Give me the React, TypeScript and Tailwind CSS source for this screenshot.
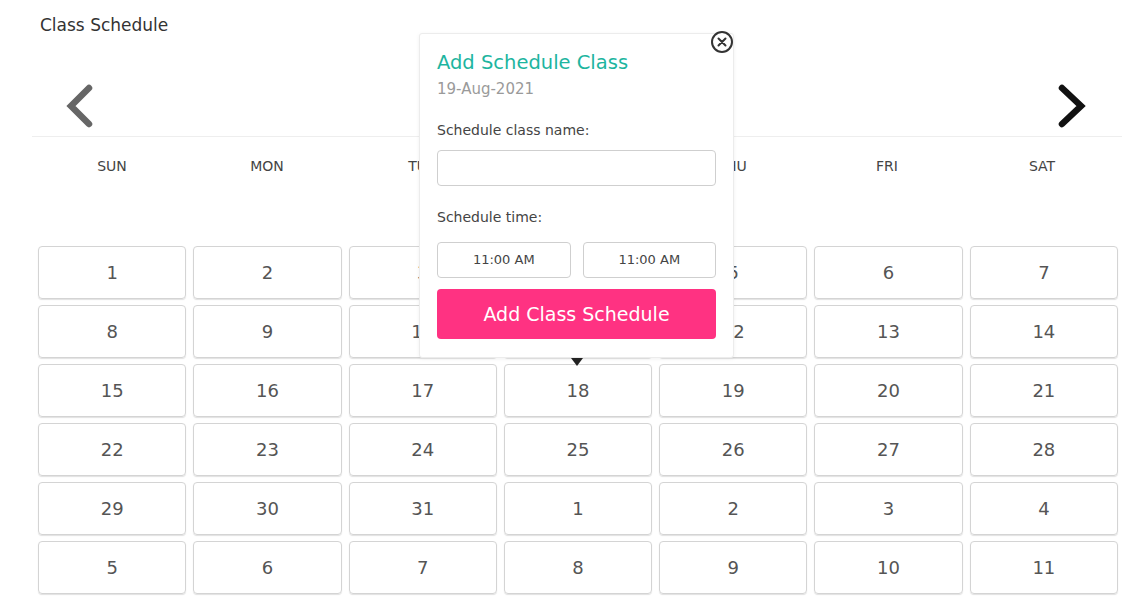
import React from "react";

const days = ["SUN", "MON", "TUE", "WED", "THU", "FRI", "SAT"];

const weeks = [
  [1, 2, 3, 4, 5, 6, 7],
  [8, 9, 10, 11, 12, 13, 14],
  [15, 16, 17, 18, 19, 20, 21],
  [22, 23, 24, 25, 26, 27, 28],
  [29, 30, 31, 1, 2, 3, 4],
  [5, 6, 7, 8, 9, 10, 11],
];

function Chevron({ dir, color }: { dir: "left" | "right"; color: string }) {
  return (
    <svg width="32" height="44" viewBox="0 0 32 44">
      {dir === "left" ? (
        <path d="M25 4 L7 22 L25 40" fill="none" stroke={color} strokeWidth="6.5" strokeLinecap="round" strokeLinejoin="miter" />
      ) : (
        <path d="M6 4 L25 22 L6 40" fill="none" stroke={color} strokeWidth="6.5" strokeLinecap="round" strokeLinejoin="miter" />
      )}
    </svg>
  );
}

export default function App() {
  return (
    <div className="relative w-[1138px] h-[604px] bg-white overflow-hidden text-[#444]" style={{ fontFamily: "'DejaVu Sans', 'Noto Sans', sans-serif" }}>
      <div className="pl-[40px] pt-[13px] text-[17px] leading-[24px] text-[#333]">Class Schedule</div>

      <div className="ml-[32px] mr-[16px] mt-[52px]">
        <div className="flex items-center justify-between h-[48px] pb-[14px] pl-[32px] pr-[34px] border-b border-[#eeeeee]">
          <Chevron dir="left" color="#666" />
          <Chevron dir="right" color="#111" />
        </div>

        <div className="grid grid-cols-7 gap-[7px] px-[6px] pt-[19px] h-[109px]">
          {days.map((d) => (
            <div key={d} className="text-center text-[14px] leading-[20px] text-[#444]">{d}</div>
          ))}
        </div>

        <div className="flex flex-col gap-[6px] pl-[6px] pr-[4px]">
          {weeks.map((w, i) => (
            <div key={i} className="grid grid-cols-7 gap-[7px]">
              {w.map((n, j) => (
                <div
                  key={j}
                  className="h-[53px] flex items-center justify-center rounded-[4px] border border-[#d4d4d4] shadow-[0_1px_1px_rgba(0,0,0,0.12)] text-[18px] text-[#555]"
                >
                  {n}
                </div>
              ))}
            </div>
          ))}
        </div>
      </div>

      {/* popover */}
      <div className="absolute left-[419px] top-[33px] w-[315px] h-[325px] bg-white border border-[#ececec] rounded-[3px] shadow-[0_1px_4px_rgba(0,0,0,0.06)] px-[17px] pt-[17px]">
        <div className="text-[19.5px] leading-[24px] text-[#1db59f]">Add Schedule Class</div>
        <div className="text-[15px] leading-[20px] text-[#9a9a9a] mt-[4px]">19-Aug-2021</div>
        <div className="text-[14px] leading-[18px] text-[#444] mt-[22px]">Schedule class name:</div>
        <div className="mt-[11px] h-[36px] border border-[#cfcfcf] rounded-[4px]" />
        <div className="text-[14px] leading-[18px] text-[#444] mt-[22px]">Schedule time:</div>
        <div className="mt-[16px] flex gap-[12px]">
          <div className="flex-1 h-[36px] border border-[#cfcfcf] rounded-[4px] flex items-center justify-center text-[13px] text-[#444]">11:00 AM</div>
          <div className="flex-1 h-[36px] border border-[#cfcfcf] rounded-[4px] flex items-center justify-center text-[13px] text-[#444]">11:00 AM</div>
        </div>
        <button className="mt-[11px] w-full h-[50px] rounded-[4px] bg-[#ff3282] text-white text-[19px]">Add Class Schedule</button>

        <div className="absolute -bottom-[9px] left-[151px] w-0 h-0 border-l-[6px] border-r-[6px] border-t-[8px] border-l-transparent border-r-transparent border-t-[#222]" />
      </div>

      <div className="absolute left-[711px] top-[31px] w-[22px] h-[22px] rounded-full bg-white border-[2px] border-[#333] flex items-center justify-center">
        <svg width="10" height="10" viewBox="0 0 10 10">
          <path d="M1.5 1.5 L8.5 8.5 M8.5 1.5 L1.5 8.5" stroke="#333" strokeWidth="2" strokeLinecap="round" />
        </svg>
      </div>
    </div>
  );
}
